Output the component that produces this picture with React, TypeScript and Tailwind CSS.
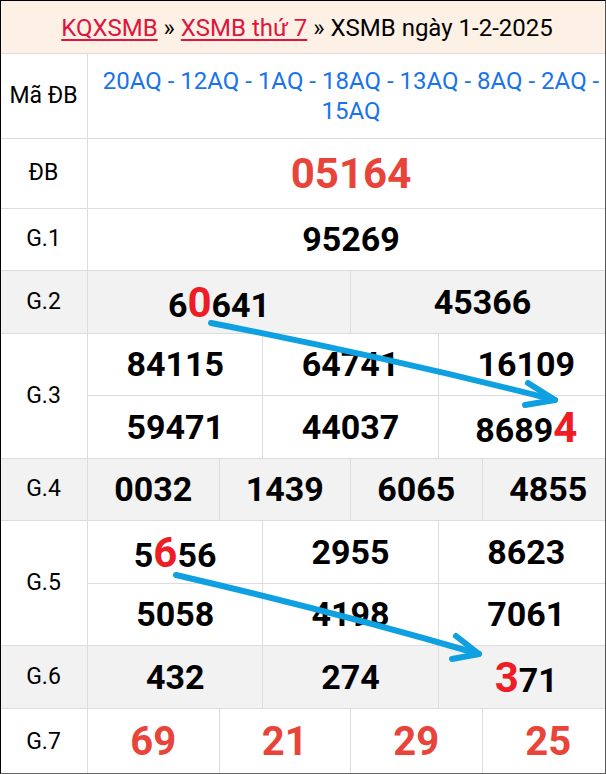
import React from 'react';

type Num = { text: string; hi?: number };

const hiDigit = (n: Num) => {
  if (n.hi === undefined) return n.text;
  return (
    <>
      {n.text.slice(0, n.hi)}
      <span className="text-[42px] text-[#ee1c25]">{n.text[n.hi]}</span>
      {n.text.slice(n.hi + 1)}
    </>
  );
};

function Cells({ nums, cols, h, red }: { nums: Num[]; cols: 2 | 3 | 4; h: string; red?: boolean }) {
  const gridCls = cols === 2 ? 'grid-cols-2' : cols === 3 ? 'grid-cols-3' : 'grid-cols-4';
  return (
    <div className={`grid ${gridCls} divide-x divide-[#dcdcdc]`}>
      {nums.map((n, i) => (
        <div
          key={i}
          className={`${h} flex items-center justify-center font-bold ${
            red ? 'text-[40px] text-[#e8443a]' : 'text-[34px] text-black'
          }`}
        >
          <span>{hiDigit(n)}</span>
        </div>
      ))}
    </div>
  );
}

function Row({ label, grey, children }: { label: string; grey?: boolean; children: React.ReactNode }) {
  return (
    <div className={`flex border-b border-[#dcdcdc] ${grey ? 'bg-[#f2f2f2]' : 'bg-white'}`}>
      <div className="w-[88px] shrink-0 border-r border-[#dcdcdc] flex items-center justify-center text-[23px] text-black">
        {label}
      </div>
      <div className="flex-1">{children}</div>
    </div>
  );
}

export default function App() {
  return (
    <div className="relative w-[606px] h-[774px] overflow-hidden bg-white font-['Roboto',sans-serif]">
      <div className="w-[614px]">
        {/* Header */}
        <div className="h-[54px] pt-[2px] border-b border-[#dcdcdc] bg-[#fdf1e6] flex items-center justify-center text-[24px] text-black whitespace-pre">
          <a href="#" className="text-[#e0143c] underline underline-offset-[3px]">KQXSMB</a>
          <span> » </span>
          <a href="#" className="text-[#e0143c] underline underline-offset-[3px]">XSMB thứ 7</a>
          <span> » XSMB ngày 1-2-2025</span>
        </div>

        <Row label="Mã ĐB">
          <div className="h-[84px] flex items-center justify-center px-3 text-center text-[24px] leading-[30px] text-[#1a73e8]">
            20AQ - 12AQ - 1AQ - 18AQ - 13AQ - 8AQ - 2AQ - 15AQ
          </div>
        </Row>

        <Row label="ĐB">
          <div className="h-[69px] flex items-center justify-center text-[42px] font-bold text-[#e8443a]">05164</div>
        </Row>

        <Row label="G.1">
          <Cells nums={[{ text: '95269' }]} cols={2} h="h-[61px] col-span-2" />
        </Row>

        <Row label="G.2" grey>
          <Cells nums={[{ text: '60641', hi: 1 }, { text: '45366' }]} cols={2} h="h-[62px]" />
        </Row>

        <Row label="G.3">
          <div className="divide-y divide-[#dcdcdc]">
            <Cells nums={[{ text: '84115' }, { text: '64741' }, { text: '16109' }]} cols={3} h="h-[61px]" />
            <Cells nums={[{ text: '59471' }, { text: '44037' }, { text: '86894', hi: 4 }]} cols={3} h="h-[62px]" />
          </div>
        </Row>

        <Row label="G.4" grey>
          <Cells nums={[{ text: '0032' }, { text: '1439' }, { text: '6065' }, { text: '4855' }]} cols={4} h="h-[61px]" />
        </Row>

        <Row label="G.5">
          <div className="divide-y divide-[#dcdcdc]">
            <Cells nums={[{ text: '5656', hi: 1 }, { text: '2955' }, { text: '8623' }]} cols={3} h="h-[62px]" />
            <Cells nums={[{ text: '5058' }, { text: '4198' }, { text: '7061' }]} cols={3} h="h-[61px]" />
          </div>
        </Row>

        <Row label="G.6" grey>
          <Cells nums={[{ text: '432' }, { text: '274' }, { text: '371', hi: 0 }]} cols={3} h="h-[62px]" />
        </Row>

        <Row label="G.7">
          <Cells nums={[{ text: '69' }, { text: '21' }, { text: '29' }, { text: '25' }]} cols={4} h="h-[66px]" red />
        </Row>
      </div>

      {/* hand-drawn arrows */}
      <svg className="absolute inset-0 pointer-events-none" width="606" height="774" viewBox="0 0 606 774">
        <g fill="none" stroke="#0ea0e0" strokeWidth="6" strokeLinecap="round" strokeLinejoin="round">
          <path d="M211 323 Q390 358 555 400" />
          <path d="M528 383 L555 400 L525 405" />
          <path d="M176 575 Q335 612 479 654" />
          <path d="M456 636 L479 654 L452 659" />
        </g>
      </svg>

      <div className="absolute inset-0 pointer-events-none border-l border-t border-l-black border-t-black border-r border-b border-r-[#555] border-b-[#666]" />
    </div>
  );
}
